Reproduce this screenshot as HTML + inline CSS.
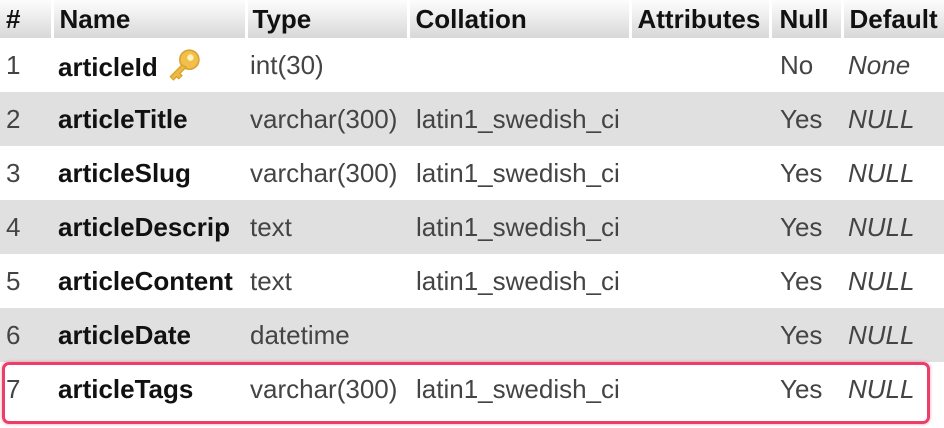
<!DOCTYPE html>
<html><head><style>
body{margin:0;width:944px;height:428px;overflow:hidden;background:#fff;font-family:"Liberation Sans",sans-serif;font-size:26px;color:#444;position:relative}
table{border-collapse:collapse;position:absolute;top:0;left:0;width:944px;table-layout:fixed}
th{height:38px;padding:0 0 0 6px;text-align:left;color:#111;font-weight:bold;background:linear-gradient(#fdfdfd,#d8d8d8);border-right:3px solid #fff;font-size:26px;white-space:nowrap;overflow:hidden;line-height:38px}
td{height:54px;padding:0 0 0 6px;white-space:nowrap;overflow:visible;line-height:30px}
tr.g td{background:#e0e0e0}
td.n{font-weight:bold;color:#111}
td.d{font-style:italic}
.box{position:absolute;left:2px;top:362px;width:922px;height:56px;border:3px solid #ec3e68;border-radius:7px;box-shadow:0 0 3px rgba(236,62,104,.5)}
</style></head><body>
<table>
<colgroup><col style="width:52px"><col style="width:194px"><col style="width:162px"><col style="width:222px"><col style="width:140px"><col style="width:72px"><col style="width:102px"></colgroup>
<tr><th>#</th><th>Name</th><th style="padding-left:5px">Type</th><th>Collation</th><th>Attributes</th><th style="padding-left:8px">Null</th><th style="border-right:0">Default</th></tr>
<tr><td>1</td><td class="n">articleId <svg width="36" height="34" viewBox="0 0 34 32" style="vertical-align:-6px"><circle cx="23" cy="11" r="9" fill="#f2c04a" stroke="#d9a130" stroke-width="1.5"/><circle cx="24" cy="9" r="3" fill="#fff3c0"/><path d="M16 16 L5 27 L8 30 L11 27 L13 29 L16 26 L14 24 L20 18 Z" fill="#efb840" stroke="#d9a130" stroke-width="1.2"/></svg></td><td style="padding-left:4px">int(30)</td><td></td><td></td><td style="padding-left:10px">No</td><td class="d">None</td></tr>
<tr class="g"><td>2</td><td class="n">articleTitle</td><td style="padding-left:4px">varchar(300)</td><td style="padding-left:8px">latin1_swedish_ci</td><td></td><td style="padding-left:10px">Yes</td><td class="d">NULL</td></tr>
<tr><td>3</td><td class="n">articleSlug</td><td style="padding-left:4px">varchar(300)</td><td style="padding-left:8px">latin1_swedish_ci</td><td></td><td style="padding-left:10px">Yes</td><td class="d">NULL</td></tr>
<tr class="g"><td>4</td><td class="n">articleDescrip</td><td style="padding-left:4px">text</td><td style="padding-left:8px">latin1_swedish_ci</td><td></td><td style="padding-left:10px">Yes</td><td class="d">NULL</td></tr>
<tr><td>5</td><td class="n">articleContent</td><td style="padding-left:4px">text</td><td style="padding-left:8px">latin1_swedish_ci</td><td></td><td style="padding-left:10px">Yes</td><td class="d">NULL</td></tr>
<tr class="g"><td>6</td><td class="n">articleDate</td><td style="padding-left:4px">datetime</td><td></td><td></td><td style="padding-left:10px">Yes</td><td class="d">NULL</td></tr>
<tr><td>7</td><td class="n">articleTags</td><td style="padding-left:4px">varchar(300)</td><td style="padding-left:8px">latin1_swedish_ci</td><td></td><td style="padding-left:10px">Yes</td><td class="d">NULL</td></tr>
</table>
<div class="box"></div>
</body></html>
